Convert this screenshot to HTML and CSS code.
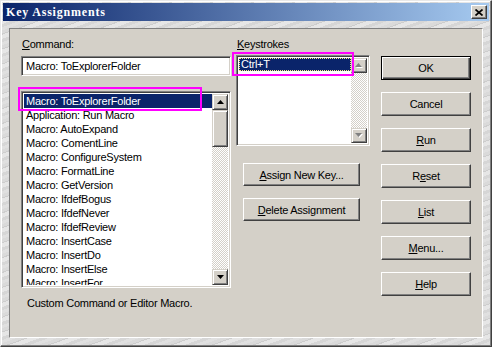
FILE: index.html
```html
<!DOCTYPE html>
<html lang="en">
<head>
    <meta charset="UTF-8">
    <title>Key Assignments</title>
    <link rel="stylesheet" href="styles.css">
</head>
<body>
    <div class="window">
        <div class="titlebar">
            <span class="title">Key Assignments</span>
            <span class="close">
                <svg width="8" height="7" viewBox="0 0 8 7"><path d="M0.5 0.5 L7.5 6.5 M7.5 0.5 L0.5 6.5" stroke="#000" stroke-width="1.7" fill="none"/></svg>
            </span>
        </div>
        <div class="frame">
            <div class="dialog">
                <div class="col-left">
                    <div class="lbl"><u>C</u>ommand:</div>
                    <div class="field">Macro: ToExplorerFolder</div>
                    <div class="listbox cmd-list">
                        <ul class="items">
                            <li class="selected">Macro: ToExplorerFolder</li>
                            <li>Application: Run Macro</li>
                            <li>Macro: AutoExpand</li>
                            <li>Macro: ComentLine</li>
                            <li>Macro: ConfigureSystem</li>
                            <li>Macro: FormatLine</li>
                            <li>Macro: GetVersion</li>
                            <li>Macro: IfdefBogus</li>
                            <li>Macro: IfdefNever</li>
                            <li>Macro: IfdefReview</li>
                            <li>Macro: InsertCase</li>
                            <li>Macro: InsertDo</li>
                            <li>Macro: InsertElse</li>
                            <li>Macro: InsertFor</li>
                        </ul>
                        <div class="scrollbar">
                            <span class="sbtn"><svg width="7" height="4"><path d="M3.5 0 L7 4 L0 4Z"/></svg></span>
                            <span class="sbtn thumb"></span>
                            <span class="track"></span>
                            <span class="sbtn"><svg width="7" height="4"><path d="M0 0 L7 0 L3.5 4Z"/></svg></span>
                        </div>
                    </div>
                    <p class="status">Custom Command or Editor Macro.</p>
                </div>

                <div class="col-mid">
                    <div class="lbl"><u>K</u>eystrokes</div>
                    <div class="listbox key-list">
                        <ul class="items">
                            <li class="selected focused">Ctrl+T</li>
                        </ul>
                        <div class="scrollbar">
                            <span class="sbtn off"><svg width="8" height="5"><path d="M4.5 1 L8 5 L1 5Z" fill="#fff"/><path d="M3.5 0 L7 4 L0 4Z" fill="#808080"/></svg></span>
                            <span class="track"></span>
                            <span class="sbtn off"><svg width="8" height="5"><path d="M1 1 L8 1 L4.5 5Z" fill="#fff"/><path d="M0 0 L7 0 L3.5 4Z" fill="#808080"/></svg></span>
                        </div>
                    </div>
                    <button class="btn wide first"><u>A</u>ssign New Key...</button>
                    <button class="btn wide"><u>D</u>elete Assignment</button>
                </div>

                <div class="col-right">
                    <button class="btn default">OK</button>
                    <button class="btn">Cancel</button>
                    <button class="btn"><u>R</u>un</button>
                    <button class="btn">R<u>e</u>set</button>
                    <button class="btn"><u>L</u>ist</button>
                    <button class="btn"><u>M</u>enu...</button>
                    <button class="btn"><u>H</u>elp</button>
                </div>
            </div>
        </div>
    </div>

    <!-- highlight marks drawn over the screenshot -->
    <div class="mark mark-cmd"></div>
    <div class="mark mark-key"></div>
</body>
</html>
```

FILE: styles.css
```css
body {
    margin: 0;
    position: relative;
    width: 492px;
    height: 347px;
    overflow: hidden;
    font-family: "Liberation Sans", Arial, sans-serif;
    font-size: 11px;
    letter-spacing: -0.25px;
    color: #000;
}
.window {
    box-sizing: border-box;
    width: 492px;
    height: 347px;
    padding: 2px;
    border: 1px solid;
    border-color: #e8e8e8 #404040 #404040 #e8e8e8;
    box-shadow: inset -1px -1px #808080, inset 1px 1px #fff;
    background: repeating-linear-gradient(160deg, #dadada 0 3px, #cdcdcd 3px 4px, #e6e6e6 4px 8px, #d6d6d6 8px 11px, #e0e0e0 11px 14px);
}
.titlebar {
    height: 18px;
    display: flex;
    align-items: center;
    justify-content: space-between;
    padding: 0 2px;
    background: linear-gradient(90deg, #0a246a, #a6caf0);
}
.title {
    font-family: "Liberation Serif", serif;
    font-weight: bold;
    font-size: 12px;
    letter-spacing: 0.8px;
    color: #fff;
    padding-left: 1px;
}
.close {
    box-sizing: border-box;
    width: 16px;
    height: 14px;
    display: flex;
    align-items: center;
    justify-content: center;
    background: #d4d0c8;
    border: 1px solid;
    border-color: #fff #404040 #404040 #fff;
    box-shadow: inset -1px -1px #808080;
}
.frame {
    padding: 7px 6px 0 6px;
}
.dialog {
    box-sizing: border-box;
    height: 310px;
    display: flex;
    align-items: flex-start;
    padding: 9px 0 0 11px;
    background: #d4d0c8;
    border: 1px solid;
    border-color: #808080 #fff #fff #808080;
}
.lbl {
    height: 13px;
    line-height: 13px;
    padding-left: 1px;
}
.col-left {
    width: 210px;
    display: flex;
    flex-direction: column;
}
.col-mid {
    width: 134px;
    margin-left: 5px;
    display: flex;
    flex-direction: column;
}
.col-right {
    width: 90px;
    margin-left: 11px;
    padding-top: 18px;
    display: flex;
    flex-direction: column;
    gap: 12px;
}
.field, .listbox {
    box-sizing: border-box;
    background: #fff;
    border: 1px solid;
    border-color: #808080 #fff #fff #808080;
    box-shadow: inset 1px 1px #404040, inset -1px -1px #d4d0c8;
}
.field {
    height: 20px;
    margin-top: 5px;
    padding: 2px 4px;
    line-height: 15px;
}
.listbox {
    display: flex;
    padding: 2px;
    overflow: hidden;
}
.cmd-list {
    height: 197px;
    margin-top: 15px;
}
.key-list {
    height: 91px;
    margin-top: 4px;
}
.items {
    flex: 1;
    list-style: none;
    margin: 0;
    padding: 0;
    overflow: hidden;
}
.items li {
    height: 14px;
    line-height: 14px;
    padding-left: 2px;
    white-space: nowrap;
}
.key-list .items li {
    height: 13px;
    line-height: 13px;
}
.items li.selected {
    background: #0a246a;
    color: #fff;
}
.items li.focused {
    box-sizing: border-box;
    border: 1px dotted #ffe680;
    padding-left: 1px;
    line-height: 11px;
}
.scrollbar {
    width: 16px;
    display: flex;
    flex-direction: column;
}
.sbtn {
    box-sizing: border-box;
    height: 16px;
    flex: none;
    display: flex;
    align-items: center;
    justify-content: center;
    background: #d4d0c8;
    border: 1px solid;
    border-color: #d4d0c8 #404040 #404040 #d4d0c8;
    box-shadow: inset 1px 1px #fff, inset -1px -1px #808080;
}
.sbtn.thumb {
    height: 37px;
}
.key-list .sbtn {
    height: 15px;
}
.track {
    flex: 1;
    background: repeating-conic-gradient(#fff 0 25%, #d4d0c8 0 50%) 0 0 / 2px 2px;
}
.status {
    margin: 9px 0 0 0;
    padding-left: 6px;
    line-height: 13px;
}
.btn {
    box-sizing: border-box;
    height: 24px;
    padding: 0;
    font: inherit;
    letter-spacing: inherit;
    color: #000;
    background: #d4d0c8;
    border: 1px solid;
    border-color: #fff #404040 #404040 #fff;
    box-shadow: inset -1px -1px #808080;
}
.btn.wide {
    width: 117px;
    margin: 12px 0 0 7px;
    height: 23px;
}
.btn.wide.first {
    margin-top: 17px;
}
.btn.default {
    border: 1px solid #000;
    box-shadow: inset 1px 1px #fff, inset -1px -1px #404040, inset -2px -2px #808080;
}
.mark {
    position: absolute;
    box-sizing: border-box;
    border: 2px solid #ff00ff;
}
.mark-cmd {
    left: 18px;
    top: 87px;
    width: 184px;
    height: 24px;
}
.mark-key {
    left: 232px;
    top: 52px;
    width: 122px;
    height: 24px;
}
```
